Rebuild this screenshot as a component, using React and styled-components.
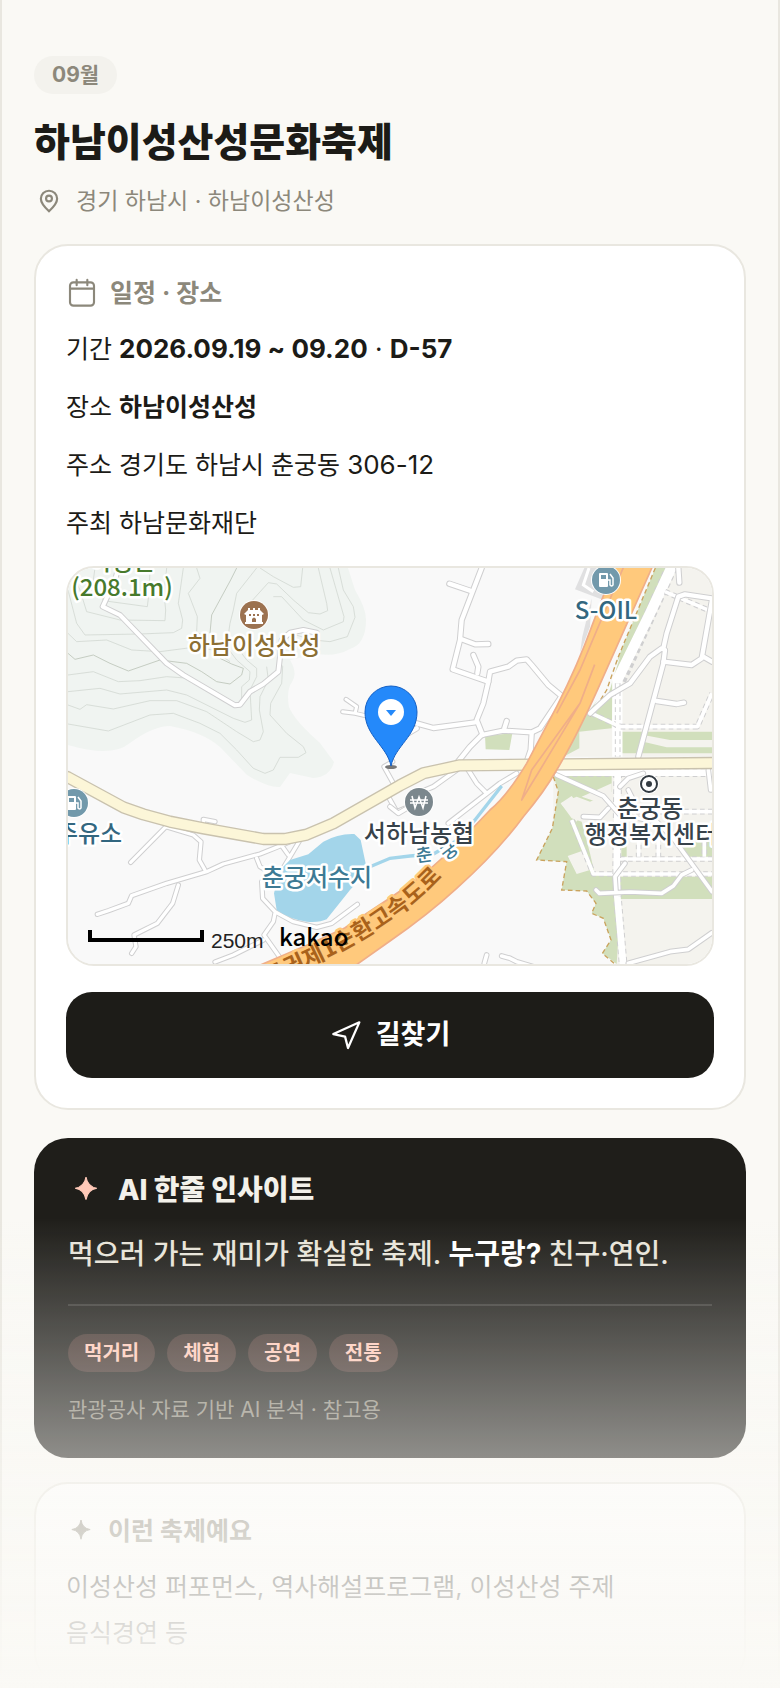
import styled, { createGlobalStyle } from 'styled-components';

const GlobalStyle = createGlobalStyle`
  *, *::before, *::after {
    box-sizing: border-box;
  }

  body {
    margin: 0;
    background: #faf9f5;
    color: #1c1b17;
    font-family: Inter, 'Noto Sans CJK KR', sans-serif;
    font-size: 25px;
    line-height: 46px;
  }

  h1, h2, p, ul {
    margin: 0;
    padding: 0;
  }
`;

const Page = styled.main`
  min-height: 100vh;
  padding: 56px 32px 0;
  border: solid #e9e7e0;
  border-width: 0 2px;
  overflow: hidden;
`;

const Header = styled.header`
  display: flex;
  flex-direction: column;
  align-items: flex-start;
`;

const MonthBadge = styled.span`
  padding: 0 18px;
  border-radius: 19px;
  background: #f3f2ed;
  color: #8c887b;
  font-size: 21px;
  font-weight: 700;
  line-height: 38px;
`;

const Title = styled.h1`
  margin-top: 20px;
  font-size: 39px;
  font-weight: 800;
  line-height: 56px;
`;

const Place = styled.p`
  display: flex;
  align-items: center;
  gap: 12px;
  margin-top: 12px;
  color: #8c887b;
  font-size: 23px;
  line-height: 38px;
`;

const IconBox = styled.span`
  display: flex;
  align-items: center;
  justify-content: center;
  flex: none;
  width: ${({ $width }) => $width}px;
`;

const Card = styled.section`
  margin-top: 24px;
  padding: 28px 30px;
  border: 2px solid #e9e7e0;
  border-radius: 34px;
  background: #fff;
`;

const CardTitle = styled.h2`
  display: flex;
  align-items: center;
  gap: 12px;
  color: #8c887b;
  font-size: 25px;
  font-weight: 700;
  line-height: 38px;
`;

const Facts = styled.ul`
  display: flex;
  flex-direction: column;
  gap: 12px;
  margin-top: 14px;
  list-style: none;
`;

const Digits = styled.span`
  font-size: 26px;
`;

const MapFrame = styled.div`
  height: 400px;
  margin-top: 20px;
  border: 2px solid #e9e7e0;
  border-radius: 28px;
  background: #f9f9f9;
  overflow: hidden;

  svg {
    display: block;
    width: 100%;
    height: 100%;
  }
`;

const RouteButton = styled.button`
  display: flex;
  align-items: center;
  justify-content: center;
  gap: 14px;
  width: 100%;
  height: 86px;
  margin: 26px 0 2px;
  border: 0;
  border-radius: 26px;
  background: #1d1c18;
  color: #fff;
  font: inherit;
  font-size: 27px;
  font-weight: 700;
  cursor: pointer;
`;

const InsightCard = styled.section`
  margin-top: 28px;
  padding: 32px 34px 30px;
  border-radius: 34px;
  background: #1f1e1a;
`;

const InsightTitle = styled.h2`
  display: flex;
  align-items: center;
  gap: 14px;
  color: #f3f1ea;
  font-size: 28px;
  font-weight: 800;
  line-height: 40px;
`;

const InsightText = styled.p`
  margin-top: 20px;
  padding-bottom: 26px;
  border-bottom: 2px solid #3c3b37;
  color: #e8e4d9;
  font-size: 28px;
  font-weight: 500;
  line-height: 48px;

  strong {
    color: #fff;
  }
`;

const Tags = styled.ul`
  display: flex;
  flex-wrap: wrap;
  gap: 12px;
  margin-top: 28px;
  list-style: none;
`;

const Tag = styled.li`
  padding: 0 16px;
  border-radius: 19px;
  background: #43332e;
  color: #ffc9b8;
  font-size: 20px;
  font-weight: 700;
  line-height: 38px;
`;

const Source = styled.p`
  margin-top: 20px;
  color: #8c887b;
  font-size: 21px;
  line-height: 36px;
`;

const Summary = styled.p`
  margin-top: 14px;
  padding-right: 12px;
  word-break: keep-all;
`;

const Fade = styled.div`
  position: fixed;
  right: 0;
  bottom: 0;
  left: 0;
  height: 472px;
  background: linear-gradient(to bottom, rgba(250, 249, 245, 0), #faf9f5);
  pointer-events: none;
`;

const MapLabel = styled.text`
  fill: ${({ $color }) => $color || '#37424a'};
  stroke: ${({ $halo }) => $halo || '#fff'};
  stroke-width: 5px;
  stroke-linejoin: round;
  paint-order: stroke;
  font-family: 'Noto Sans CJK KR', sans-serif;
  font-size: ${({ $size }) => $size || 24}px;
  font-weight: ${({ $bold }) => ($bold ? 700 : 500)};
  text-anchor: middle;
`;

const ScaleText = styled.text`
  font-family: 'Liberation Sans', sans-serif;
  font-size: 21px;
  fill: #222;
`;

const MapBrand = styled.text`
  font-family: 'Noto Sans CJK KR', sans-serif;
  font-size: 24px;
  font-weight: 500;
  fill: #000;
`;

const tags = ['먹거리', '체험', '공연', '전통'];

const contours = [
  'M55 24L45 60L60 90L80 155L180 180L315 182L317 150L312 100L320 24',
  'M105 24L100 60L130 122L262 140L268 90L270 24',
  'M24 90L50 190L75 225L240 222L340 218L365 205L368 180L355 130L370 24',
  'M24 220L50 245L140 240L215 270L300 275L400 262L460 270L510 305',
  'M410 24L420 55L385 100L412 170L410 215L440 235',
  'M600 24L640 50L700 82L722 80L728 24',
  'M590 24L530 100L520 150L510 190L500 260L530 300L570 335L568 360L545 380L545 420',
  'M560 140L625 68L650 72L700 120L745 158L780 162L803 152L800 130L775 24',
  'M640 110L665 110L730 180L790 210L850 185L852 170L810 24',
  'M690 220L760 240L810 245L862 230L885 172L880 140L850 90L835 24',
  'M530 260L560 300L590 325L590 350L570 390L575 480L555 487L520 475L450 440L380 405L320 390L180 402L120 385L24 395',
  'M24 345L100 335L175 365L240 362L320 350L390 355L460 390L520 430',
  'M24 435L60 448L80 434L160 447L270 422L350 422L440 455L530 515L580 545L600 540L610 515L598 450L600 410L625 360L620 320',
  'M24 492L145 513L270 465L340 460L420 490L480 520L530 570L580 625L615 640L640 630L660 592L715 592L738 578L730 560L680 520L630 465L632 430L665 370L668 320L655 300',
];

function CalendarIcon() {
  return (
    <svg width="32" height="32" viewBox="0 0 24 24" fill="none" stroke="currentColor" strokeWidth="1.6" strokeLinecap="round" aria-hidden="true">
      <rect x="3" y="4" width="18" height="17.5" rx="2.6" />
      <path d="M3 8.7h18M8 2.2v4M16 2.2v4" />
    </svg>
  );
}

function PinIcon() {
  return (
    <svg width="26" height="26" viewBox="0 0 24 24" fill="none" stroke="currentColor" strokeWidth="2" aria-hidden="true">
      <path d="M12 21.5C7.5 17.4 4.5 14 4.5 10a7.5 7.5 0 0 1 15 0c0 4-3 7.4-7.5 11.5z" />
      <circle cx="12" cy="9.7" r="2.7" />
    </svg>
  );
}

function RouteIcon() {
  return (
    <svg width="32" height="32" viewBox="0 0 24 24" fill="none" stroke="currentColor" strokeWidth="1.7" strokeLinejoin="round" aria-hidden="true">
      <path d="M2.5 11.3L22 2.5L13.5 21.8L11.3 13.2z" />
    </svg>
  );
}

function SparkIcon({ size, color }) {
  return (
    <svg width={size} height={size} viewBox="0 2 24 24" fill={color} aria-hidden="true">
      <path d="M12 2Q13.4 11 22 12.4Q13.4 13.8 12 23Q10.6 13.8 2 12.4Q10.6 11 12 2z" stroke={color} />
    </svg>
  );
}

// A road is a wide grey line with a thinner white one on top
function Roads({ paths, width = 13, dashed = false }) {
  return (
    <g fill="none" strokeLinecap={dashed ? 'butt' : 'round'} strokeLinejoin="round">
      {paths.map((d) => (
        <path key={d} d={d} stroke="#cfcfd0" strokeWidth={width + 6} strokeDasharray={dashed ? '14 10' : undefined} />
      ))}
      {paths.map((d) => (
        <path key={d} d={d} stroke="#fff" strokeWidth={width} />
      ))}
    </g>
  );
}

function FuelMark({ x, y }) {
  return (
    <g transform={`translate(${x} ${y})`}>
      <circle r="15" fill="#fff" />
      <circle r="14" fill="#7299ab" />
      <rect x="-7" y="-7" width="9" height="14" rx="1" fill="#fff" />
      <rect x="-5" y="-5" width="5" height="4" fill="#7299ab" />
      <path d="M2 0h2v5q2 2 3 0v-7l-3-4" fill="none" stroke="#fff" strokeWidth="1.5" />
    </g>
  );
}

function VenueMap() {
  return (
    <svg viewBox="0 0 644 396" preserveAspectRatio="xMidYMid slice" role="img" aria-label="하남이성산성 지도">
      <defs>
        <path id="expressway" d="M117 441Q167 424 222 399Q287 370 327 340Q347 326 369 303" />
      </defs>
      <rect width="644" height="396" fill="#f9f9f9" />
      <path
        d="M0 0H280L287 22Q298 40 298 52Q298 76 282 81Q268 89 249 86L222 92Q230 105 224 114Q218 122 221 139Q226 152 252 175L266 194Q262 209 245 210L222 205L212 219Q200 220 179 207L152 179Q135 164 102 158Q85 158 62 175Q44 190 0 177z"
        fill="#f0f4f1"
      />

      {/* north west */}
      <g transform="translate(-8 -8) scale(0.333333)">
        <g fill="none" stroke="#d3d8d2" strokeWidth="2.5" strokeLinejoin="round">
          {contours.map((d) => (
            <path key={d} d={d} />
          ))}
          <path stroke="#bcc4b8" d="M24 280L45 298L100 285L150 310L205 333L300 300L380 310L425 335L470 365L510 372L545 345L550 325L515 312L480 295M530 24L512 60L455 165L450 220" />
        </g>
        <Roads paths={['M175 24L165 60L128 140L180 165L320 310L370 345L525 436L540 434L570 395L610 372L655 335L660 290L665 240L690 218L730 210L770 218']} width={12} />
        <Roads paths={['M858 418L890 440L885 460L848 455M885 460L950 475']} width={9} />
      </g>

      {/* north east */}
      <g transform="translate(322 -8) scale(0.333333)">
        <path d="M800 24H966V590H500L620 430L690 290z" fill="#f4f3ee" />
        <path d="M796 24H835L800 110L730 250L670 380L665 505L615 510L568 515V565L520 590L560 500L650 385L690 280z" fill="#d1dfbc" />
        <path d="M694 515H966V580H694zM285 527L367 520L358 570L287 568z" fill="#d1dfbc" />
        <path d="M760 525L840 540H966V562H830L760 545z" fill="#f4f3ee" />
        <path d="M583 24H640V120L555 88z" fill="#e0e0e1" />
        <path d="M605 115L600 200L570 280L577 230z" fill="#e0e0e1" />
        <path d="M690 290L600 460L650 420z" fill="#f9f9f9" />
        <path d="M796 24L685 290L650 390L600 470" fill="none" stroke="#caa35d" strokeWidth="4" strokeDasharray="14 9" />
        <path d="M845 20L690 360" fill="none" stroke="#cfcfd0" strokeWidth="38" strokeDasharray="14 10" />
        <path d="M850 10L780 160L682 360L682 590" fill="none" stroke="#fff" strokeWidth="31" />
        <Roads dashed paths={['M683 370V590', 'M605 460L690 500L922 500L966 400', 'M825 95L966 155']} width={11} />
        <Roads
          paths={[
            'M275 24L215 180L210 240L188 328L295 365L300 335L355 320L380 302L410 298L425 315L475 375L515 408L450 505L425 517L340 512L275 525L240 560L200 610',
            'M178 71L240 92M215 238L255 253L295 252M250 285L265 320L262 340M295 365L280 430L260 480L278 525',
            'M80 490L130 504L255 487M80 505L20 540M343 505L350 483M425 520L422 570L412 600',
            'M600 460L660 405L720 370L780 290L815 265L825 270L820 310L745 590',
            'M820 265L830 220L865 110L885 103L966 115M820 305L905 315L935 295L966 120M940 290L966 305M800 423L860 432L882 428M865 24L868 68',
          ]}
        />
        <path d="M597 24L580 75L610 95" fill="none" stroke="#fff" strokeWidth="9" />
      </g>

      {/* south west */}
      <g transform="translate(-8 192) scale(0.333333)">
        <Roads
          paths={[
            'M112 463L145 452L205 430L215 407L320 370L440 335L490 312L600 282L650 262L740 224',
            'M212 307L318 200L400 225L423 245L418 300L435 330M355 375L338 430L292 490L222 525L228 560L215 580',
            'M430 195V178L465 185M660 250L685 285M720 240L660 340M590 295L600 320L625 335',
            'M605 365L608 415L645 455L700 485L770 502L815 490L892 433M645 460L640 485L612 525L665 600M465 606L520 585L610 540',
            'M1000 70L972 20L998 5M985 110L1010 155L1045 140',
          ]}
          width={10}
        />
        <path d="M690 300L745 283L790 245Q835 220 883 222L902 240L918 315Q900 360 870 390L800 478Q780 488 740 485Q690 478 650 450L642 400L660 330z" fill="#a3d5ea" />
      </g>

      {/* south east */}
      <g transform="translate(322 192) scale(0.333333)">
        <path d="M490 30H966V620H675L690 417L600 380L490 200z" fill="#f4f3ee" />
        <path
          d="M490 45H665V95L600 125L560 110L512 130L545 175L575 185L600 280L615 345L690 350H966V417H692L680 612L637 580L663 540L640 475L605 460L618 430L590 393L515 390L530 305L440 300L487 205L505 95z"
          fill="#d1dfbc"
        />
        <path d="M575 110L665 70V120L620 125zM512 130L545 108L580 150L560 185zM533 288L578 272L600 330L560 342z" fill="#f4f3ee" />
        <path d="M880 245H966V290H880zM694 250H710V290H694z" fill="#d1dfbc" />
        <path d="M490 50L505 95L487 205L440 300L530 305L515 390L590 393L618 430L605 460L640 475L663 540L637 580L675 612" fill="none" stroke="#caa35d" strokeWidth="4" strokeDasharray="14 9" />
        <Roads dashed paths={['M545 180L610 342H966', 'M690 297H966', 'M690 155H966', 'M746 230V290M805 230V290M943 245V290']} width={11} />
        <Roads dashed paths={['M683 40L680 330L682 410L700 620', 'M500 38H966']} width={20} />
        <Roads
          paths={[
            'M500 45L640 108L690 165L800 185L850 235L966 395M655 145L630 172L580 170M690 80L715 55L760 40M715 90L735 130',
            'M618 390L628 400L720 396L815 400L850 378L875 345L905 330M705 310L675 350L678 395',
            'M715 610L840 575L895 568L966 518M283 610L290 585M335 588L360 595L380 605L430 620M955 30L962 90',
            'M235 30L260 70L285 95M175 190L330 70L380 40M60 110L130 80L200 30M0 140L25 160L50 145',
          ]}
          width={11}
        />
        <path d="M-60 320L0 295L60 288L130 282L195 245L255 180L335 78" fill="none" stroke="#a3d5ea" strokeWidth="10" />
      </g>

      {/* main roads */}
      <g transform="scale(0.333333)" fill="none" strokeLinejoin="round">
        <path d="M-10 624L0 628L166 718L226 739L306 761L406 781L586 813H651L716 800L796 766L996 652L1066 616L1176 592L1940 585" stroke="#c9c2ae" strokeWidth="37" />
        <path d="M-10 624L0 628L166 718L226 739L306 761L406 781L586 813H651L716 800L796 766L996 652L1066 616L1176 592L1940 585" stroke="#fcf6d8" strokeWidth="29" />
        <path
          d="M1640 -6L1571 176Q1530 290 1466 416L1376 586Q1320 680 1266 726L1166 831L1066 921L966 990L830 1080L720 1130L570 1194H860L966 1119Q1080 1040 1166 961Q1290 850 1366 746Q1430 670 1466 606Q1530 500 1606 326L1754 -6z"
          fill="#ffc97c"
          stroke="#f0ae88"
          strokeWidth="5"
        />
        <path d="M1668 -6L1591 176L1536 306L1466 436M1580 290L1536 406L1416 606L1361 696L1391 606L1536 406" stroke="#f0ae88" strokeWidth="5" />
      </g>

      <MapLabel $color="#a9621b" $halo="#ffc97c" $size={23} $bold dy="8">
        <textPath href="#expressway" startOffset="100%" textAnchor="end">수도권제1순환고속도로</textPath>
      </MapLabel>
      <MapLabel $color="#3d7a94" $size={18} transform="translate(357 293) rotate(-8)">춘</MapLabel>
      <MapLabel $color="#3d7a94" $size={18} transform="translate(385 288) rotate(-38)">궁</MapLabel>

      <MapLabel $color="#477a2c" x="54" y="2">이성산</MapLabel>
      <MapLabel $color="#477a2c" x="54" y="28">(208.1m)</MapLabel>

      <circle cx="186" cy="47" r="15" fill="#fff" />
      <circle cx="186" cy="47" r="14" fill="#9c7250" />
      <path d="M178 54V47L176 46L180 42V40H182V42H185V40H187V42H190V40H192V42L196 46L194 47V54H195V56H177V54zM184 54H188V51Q186 48 184 51zM181 46V48H183V46zM185 46V48H187V46zM189 46V48H191V46z" fill="#fff" fillRule="evenodd" />
      <MapLabel $color="#8c6f34" x="186" y="86">하남이성산성</MapLabel>

      <FuelMark x={538} y={12} />
      <MapLabel $color="#336780" x="538" y="51">S-OIL</MapLabel>
      <FuelMark x={6} y={235} />
      <MapLabel $color="#336780" x="21" y="274">주유소</MapLabel>
      <MapLabel $color="#3d7a94" x="249" y="318">춘궁저수지</MapLabel>

      <circle cx="351" cy="234" r="15" fill="#fff" />
      <circle cx="351" cy="234" r="14" fill="#7b878d" />
      <path d="M344 228L347 240L351 229L355 240L358 228M342 232H360M342 235H360" fill="none" stroke="#fff" strokeWidth="1.5" />
      <MapLabel x="351" y="274">서하남농협</MapLabel>

      <circle cx="581" cy="216" r="10" fill="#fff" />
      <circle cx="581" cy="216" r="8" fill="#fff" stroke="#333b42" strokeWidth="2" />
      <circle cx="581" cy="216" r="3" fill="#333b42" />
      <MapLabel x="582" y="249">춘궁동</MapLabel>
      <MapLabel x="583" y="275">행정복지센터</MapLabel>

      <ellipse cx="323" cy="199" rx="6" ry="2" fill="#777" />
      <path d="M323 198C319 178 297 168 297 144A26 26 0 0 1 349 144C349 168 327 178 323 198z" fill="#2489fa" stroke="#1560c4" />
      <circle cx="323" cy="144" r="13" fill="#fff" />
      <path d="M318 142H328L323 148z" fill="#2489fa" />

      <path d="M22 362V372H134V362" fill="none" stroke="#000" strokeWidth="4" />
      <ScaleText x="143" y="380">250m</ScaleText>
      <MapBrand x="211" y="378">kakao</MapBrand>
    </svg>
  );
}

function App() {
  return (
    <>
      <GlobalStyle />
      <Page>
        <Header>
          <MonthBadge>09월</MonthBadge>
          <Title>하남이성산성문화축제</Title>
          <Place>
            <IconBox $width={30}>
              <PinIcon />
            </IconBox>
            경기 하남시 · 하남이성산성
          </Place>
        </Header>

        <Card>
          <CardTitle>
            <IconBox $width={32}>
              <CalendarIcon />
            </IconBox>
            일정 · 장소
          </CardTitle>
          <Facts>
            <li>
              기간 <Digits><strong>2026.09.19 ~ 09.20</strong> · <strong>D-57</strong></Digits>
            </li>
            <li>
              장소 <strong>하남이성산성</strong>
            </li>
            <li>
              주소 경기도 하남시 춘궁동 <Digits>306-12</Digits>
            </li>
            <li>주최 하남문화재단</li>
          </Facts>
          <MapFrame>
            <VenueMap />
          </MapFrame>
          <RouteButton type="button">
            <RouteIcon />
            길찾기
          </RouteButton>
        </Card>

        <InsightCard>
          <InsightTitle>
            <IconBox $width={36}>
              <SparkIcon size={26} color="#ffc9b8" />
            </IconBox>
            AI 한줄 인사이트
          </InsightTitle>
          <InsightText>
            먹으러 가는 재미가 확실한 축제. <strong>누구랑?</strong> 친구·연인.
          </InsightText>
          <Tags>
            {tags.map((tag) => (
              <Tag key={tag}>{tag}</Tag>
            ))}
          </Tags>
          <Source>관광공사 자료 기반 AI 분석 · 참고용</Source>
        </InsightCard>

        <Card>
          <CardTitle>
            <IconBox $width={30}>
              <SparkIcon size={22} color="#8c887b" />
            </IconBox>
            이런 축제예요
          </CardTitle>
          <Summary>이성산성 퍼포먼스, 역사해설프로그램, 이성산성 주제 음식경연 등</Summary>
        </Card>
      </Page>
      <Fade />
    </>
  );
}

export default App;
